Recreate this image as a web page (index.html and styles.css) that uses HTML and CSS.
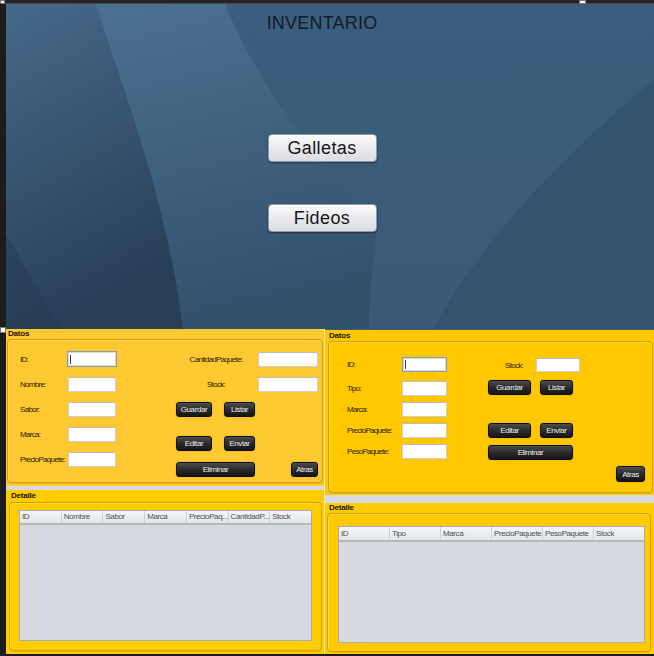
FILE: index.html
```html
<!DOCTYPE html>
<html lang="es">
<head>
<meta charset="utf-8">
<title>Inventario</title>
<link rel="stylesheet" href="styles.css">
</head>
<body>
<div class="window">
  <div class="topbar"></div>
  <div class="frame">
    <div class="strip"></div>
    <div class="content">
      <section class="hero">
        <svg class="hero-bg" viewBox="0 0 648 325" preserveAspectRatio="none" aria-hidden="true">
          <defs>
            <linearGradient id="gl" x1="0" y1="0" x2="0.3" y2="1">
              <stop offset="0" stop-color="#46698a"/>
              <stop offset="1" stop-color="#283f58"/>
            </linearGradient>
            <linearGradient id="gm" x1="0" y1="0" x2="0.2" y2="1">
              <stop offset="0" stop-color="#4b7191"/>
              <stop offset="1" stop-color="#33516d"/>
            </linearGradient>
            <linearGradient id="gr" x1="0" y1="0" x2="0" y2="1">
              <stop offset="0" stop-color="#3b5e7e"/>
              <stop offset="1" stop-color="#3a5a77"/>
            </linearGradient>
          </defs>
          <rect width="648" height="325" fill="url(#gr)"/>
          <path d="M0 0H90C122 100 162 200 177 325H0Z" fill="url(#gl)"/>
          <path d="M90 0H219C250 80 310 150 371 226C366 260 364 290 363 325H177C162 200 122 100 90 0Z" fill="url(#gm)"/>
          <path d="M648 75C560 150 480 230 427 325H648Z" fill="#33546f"/>
          <path d="M0 230L55 325H0Z" fill="#22394f" opacity="0.4"/>
        </svg>
        <h1 class="title">INVENTARIO</h1>
        <button class="big-btn galletas">Galletas</button>
        <button class="big-btn fideos">Fideos</button>
      </section>

      <div class="panels">
        <div class="col col-left">
          <section class="panel datos datos-l">
            <div class="ptitle">Datos</div>
            <div class="box">
              <div class="fields">
                <div class="row"><span class="lbl">ID:</span><div class="field focus"><span class="caret"></span></div></div>
                <div class="row"><span class="lbl">Nombre:</span><div class="field"></div></div>
                <div class="row"><span class="lbl">Sabor:</span><div class="field"></div></div>
                <div class="row"><span class="lbl">Marca:</span><div class="field"></div></div>
                <div class="row"><span class="lbl">PrecioPaquete:</span><div class="field"></div></div>
              </div>
              <div class="actions">
                <div class="a-row ar1"><span class="albl">CantidadPaquete:</span><div class="field wide"></div></div>
                <div class="a-row ar2"><span class="albl">Stock:</span><div class="field wide"></div></div>
                <div class="a-row ar3"><button class="dbtn w36">Guardar</button><button class="dbtn w31">Listar</button></div>
                <div class="a-row ar4"><button class="dbtn w36">Editar</button><button class="dbtn w31">Enviar</button></div>
                <div class="a-row ar5"><button class="dbtn w79">Eliminar</button><button class="dbtn atras">Atras</button></div>
              </div>
            </div>
          </section>
          <div class="gap-strip"></div>
          <section class="panel detalle">
            <div class="ptitle">Detalle</div>
            <div class="box">
              <div class="table">
                <div class="thead">
                  <span>ID</span><span>Nombre</span><span>Sabor</span><span>Marca</span><span>PrecioPaq...</span><span>CantidadP...</span><span>Stock</span>
                </div>
                <div class="tbody"></div>
              </div>
            </div>
          </section>
        </div>

        <div class="sep"></div>

        <div class="col col-right">
          <section class="panel datos datos-r">
            <div class="ptitle">Datos</div>
            <div class="box">
              <div class="fields">
                <div class="row"><span class="lbl">ID:</span><div class="field focus"><span class="caret"></span></div></div>
                <div class="row"><span class="lbl">Tipo:</span><div class="field"></div></div>
                <div class="row"><span class="lbl">Marca:</span><div class="field"></div></div>
                <div class="row"><span class="lbl">PrecioPaquete:</span><div class="field"></div></div>
                <div class="row"><span class="lbl">PesoPaquete:</span><div class="field"></div></div>
              </div>
              <div class="actions">
                <div class="a-row br1"><span class="albl">Stock:</span><div class="field small"></div></div>
                <div class="a-row br2"><button class="dbtn w43">Guardar</button><button class="dbtn w33">Listar</button></div>
                <div class="a-row br3"><button class="dbtn w43">Editar</button><button class="dbtn w33">Enviar</button></div>
                <div class="a-row br4"><button class="dbtn w85">Eliminar</button></div>
                <div class="a-row br5"><button class="dbtn atras">Atras</button></div>
              </div>
            </div>
          </section>
          <div class="gap-strip"></div>
          <section class="panel detalle">
            <div class="ptitle">Detalle</div>
            <div class="box">
              <div class="table">
                <div class="thead">
                  <span>ID</span><span>Tipo</span><span>Marca</span><span>PrecioPaquete</span><span>PesoPaquete</span><span>Stock</span>
                </div>
                <div class="tbody"></div>
              </div>
            </div>
          </section>
        </div>
      </div>
    </div>
  </div>
  <span class="handle hd-tl"></span>
  <span class="handle hd-top"></span>
  <span class="handle hd-left"></span>
</div>
</body>
</html>
```

FILE: styles.css
```css
* { box-sizing: border-box; margin: 0; padding: 0; }

html, body {
  width: 654px;
  height: 656px;
  overflow: hidden;
  background: #1c1c1c;
}

body {
  font-family: "Liberation Sans", Arial, sans-serif;
}

.window {
  position: relative;
  width: 654px;
  height: 656px;
}

.topbar {
  height: 4px;
  background: #242424;
  border-bottom: 1px solid #4a4a4a;
}

.frame {
  display: flex;
  height: 650px;
}

.strip {
  width: 6px;
  background: #1c1c1c;
}

.content {
  width: 648px;
  display: flex;
  flex-direction: column;
}

/* ---------- hero ---------- */
.hero {
  position: relative;
  height: 325px;
  display: flex;
  flex-direction: column;
  align-items: center;
  padding: 9px 16px 0 0;
  overflow: hidden;
}

.hero-bg {
  position: absolute;
  left: 0;
  top: 0;
  width: 100%;
  height: 100%;
}

.title {
  position: relative;
  font-size: 18px;
  font-weight: normal;
  line-height: 20px;
  color: #121b28;
  letter-spacing: 0.2px;
}

.big-btn {
  position: relative;
  width: 109px;
  height: 28px;
  margin-top: 101px;
  font-family: "Liberation Sans", Arial, sans-serif;
  font-size: 18px;
  letter-spacing: 0.4px;
  color: #161616;
  background: linear-gradient(#fbfbfc, #ececef 45%, #dcdde2);
  border: 1px solid #8f9aa6;
  border-radius: 4px;
  box-shadow: 0 1px 2px rgba(0, 0, 0, 0.45), inset 0 1px 0 #ffffff;
}

.big-btn.fideos {
  margin-top: 42px;
}

/* ---------- panels ---------- */
.panels {
  display: flex;
  height: 325px;
}

.col {
  display: flex;
  flex-direction: column;
}

.col-left { width: 318px; }
.col-right { width: 329px; }

.sep {
  width: 1px;
  background: #ece6c8;
}

.panel {
  display: flex;
  flex-direction: column;
}

.datos-l { height: 157px; background: #ffc932; }
.col-left .gap-strip { height: 4px; }
.col-left .detalle { height: 164px; background: #ffcc00; }

.datos-r { height: 166px; background: #ffc800; border-top: 1px solid #3c5c79; }
.col-right .gap-strip { height: 8px; }
.col-right .detalle { height: 151px; background: #ffcb00; }

.gap-strip { background: #d7dae1; }

.ptitle {
  font-size: 8px;
  font-weight: bold;
  color: #1b1400;
  letter-spacing: -0.2px;
  white-space: nowrap;
}

.datos-l .ptitle { height: 10px; line-height: 10px; padding-left: 2px; }
.datos-r .ptitle { height: 11px; line-height: 11px; padding-left: 4px; }
.col-left .detalle .ptitle { height: 12px; line-height: 12px; padding-left: 5px; }
.col-right .detalle .ptitle { height: 10px; line-height: 10px; padding-left: 4px; }

.box {
  flex: 1;
  display: flex;
  border: 1px solid #d2a207;
  border-radius: 4px;
  box-shadow: inset 1px 1px 0 rgba(255, 255, 255, 0.22), 0 1px 0 rgba(150, 110, 0, 0.18);
}

.datos-l .box { margin: 0 1px 3px 1px; padding: 11px 0 0 12px; }
.datos-r .box { margin: 0 1px 2px 3px; padding: 15px 0 0 18px; }
.col-left .detalle .box { margin: 0 2px 3px 3px; padding: 7px 9px 9px 9px; }
.col-right .detalle .box { margin: 0 3px 2px 2px; padding: 12px 5px 8px 10px; }

/* ---------- form fields ---------- */
.fields {
  display: flex;
  flex-direction: column;
}

.datos-l .fields { gap: 9px; }
.datos-r .fields { gap: 6px; }
.datos-r .fields .row:first-child { margin-bottom: 3px; }

.row {
  display: flex;
  align-items: center;
}

.datos-l .row { height: 16px; }
.datos-r .row { height: 15px; }

.lbl, .albl {
  font-size: 8px;
  color: #2b2200;
  letter-spacing: -0.7px;
  white-space: nowrap;
}

.datos-l .lbl { width: 47px; }
.datos-r .lbl { width: 55px; }

.field {
  background: #ffffff;
  border: 1px solid #cfcfcf;
  border-top-color: #bdbdbd;
  box-shadow: 0 0 1px rgba(0, 0, 0, 0.08);
}

.datos-l .field { width: 48px; height: 15px; margin-left: 1px; }
.datos-r .field { width: 45px; height: 15px; }

.datos-l .field.focus,
.datos-r .field.focus {
  display: flex;
  align-items: center;
  padding-left: 2px;
  border: 1px solid #8c9bab;
  box-shadow: inset 0 0 0 1px #d3dbe4;
}

.datos-l .field.focus { width: 50px; height: 16px; margin-left: 0; }

.caret {
  width: 1px;
  height: 9px;
  background: #3a3a3a;
}

.actions {
  display: flex;
  flex-direction: column;
}

.datos-l .actions { margin-left: 59px; width: 142px; padding-top: 1px; }
.datos-r .actions { margin-left: 41px; width: 157px; padding-top: 1px; }

.a-row {
  display: flex;
  align-items: center;
}

.datos-l .a-row { height: 15px; }
.ar2, .ar3 { margin-top: 10px; }
.ar4 { margin-top: 19px; }
.ar5 { margin-top: 11px; }
.ar3, .ar4 { gap: 12px; }

.datos-l .albl {
  width: 80px;
  margin-right: 2px;
  text-align: center;
}

.datos-l .field.wide { width: 60px; height: 15px; margin-left: 0; }

.br1 { height: 14px; }
.br2 { margin-top: 8px; gap: 9px; }
.br3 { margin-top: 28px; gap: 9px; }
.br4 { margin-top: 7px; }
.br5 { margin-top: 6px; justify-content: flex-end; }

.datos-r .albl {
  width: 48px;
  padding-left: 17px;
}

.datos-r .field.small { width: 44px; height: 14px; }

/* ---------- dark buttons ---------- */
.dbtn {
  height: 15px;
  padding: 0;
  font-family: "Liberation Sans", Arial, sans-serif;
  font-size: 8px;
  letter-spacing: -0.4px;
  color: #ececec;
  background: linear-gradient(#4c4c4c, #2b2b2b 50%, #161616);
  border: 1px solid #101010;
  border-radius: 3px;
  box-shadow: 0 0 1px rgba(0, 0, 0, 0.5);
  white-space: nowrap;
}

.w31 { width: 31px; }
.w33 { width: 33px; }
.w36 { width: 36px; }
.w43 { width: 43px; }
.w79 { width: 79px; }
.w85 { width: 85px; }

.atras { width: 27px; margin-left: auto; }
.datos-r .atras { width: 29px; height: 16px; }

/* ---------- tables ---------- */
.table {
  flex: 1;
  display: flex;
  flex-direction: column;
  border: 1px solid #a8adb5;
  background: #d6d9e0;
}

.thead {
  display: flex;
  background: linear-gradient(#f5f6f8, #e3e5e9);
  border-bottom: 2px solid #b3b7be;
}

.col-left .thead { height: 14px; }
.col-right .thead { height: 15px; }

.thead span {
  flex: 1;
  min-width: 0;
  overflow: hidden;
  font-size: 8px;
  line-height: 12px;
  color: #4e4e4e;
  letter-spacing: -0.4px;
  padding-left: 2px;
  border-right: 1px solid #cdd0d5;
  white-space: nowrap;
}

.col-right .thead span { line-height: 13px; }

.thead span:last-child { border-right: none; }

.tbody { flex: 1; }

/* ---------- selection handles ---------- */
.handle {
  position: absolute;
  background: #ffffff;
  border: 1px solid #777777;
}

.hd-tl { left: 0; top: 0; width: 5px; height: 4px; }
.hd-top { left: 579px; top: 0; width: 7px; height: 4px; }
.hd-left { left: 0; top: 327px; width: 6px; height: 6px; }
```
